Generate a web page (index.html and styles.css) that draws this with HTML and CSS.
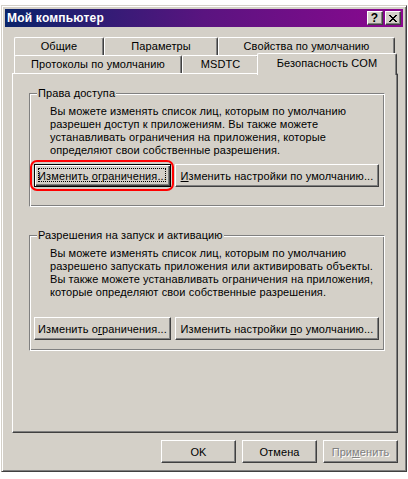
FILE: index.html
```html
<!DOCTYPE html>
<html>

<head>
    <title>Мой компьютер</title>
    <link rel="stylesheet" href="styles.css">
</head>

<body>
    <div class="window">
        <div class="titlebar">
            <span class="title">Мой компьютер</span>
            <div class="title-buttons">
                <span class="tbtn tbtn-help">?</span>
                <span class="tbtn tbtn-close">
                    <svg width="8" height="7" viewBox="0 0 8 7">
                        <path d="M0 0h2v1h1v1h2v-1h1v-1h2v1h-1v1h-1v1h-1v1h1v1h1v1h1v1h-2v-1h-1v-1h-2v1h-1v1h-2v-1h1v-1h1v-1h1v-1h-1v-1h-1v-1h-1z" fill="#000"/>
                    </svg>
                </span>
            </div>
        </div>

        <div class="dialog">
            <div class="tabs">
                <div class="tab-row row-back">
                    <div class="tab tab-general">Общие</div>
                    <div class="tab tab-options">Параметры</div>
                    <div class="tab tab-defaults">Свойства по умолчанию</div>
                </div>
                <div class="tab-row row-front">
                    <div class="tab tab-protocols">Протоколы по умолчанию</div>
                    <div class="tab tab-msdtc">MSDTC</div>
                    <div class="tab tab-security selected">Безопасность COM</div>
                </div>
            </div>

            <div class="panel">
                <!-- Access permissions -->
                <div class="group group-access">
                    <span class="group-title">Права доступа</span>
                    <p class="group-text">
                        Вы можете изменять список лиц, которым по умолчанию<br>
                        разрешен доступ к приложениям. Вы также можете<br>
                        устанавливать ограничения на приложения, которые<br>
                        определяют свои собственные разрешения.
                    </p>
                    <div class="group-buttons">
                        <div class="highlight">
                            <button class="btn btn-limits btn-default">Изменить <u>о</u>граничения...</button>
                        </div>
                        <button class="btn btn-settings"><u>И</u>зменить настройки по умолчанию...</button>
                    </div>
                </div>

                <!-- Launch and activation -->
                <div class="group group-launch">
                    <span class="group-title">Разрешения на запуск и активацию</span>
                    <p class="group-text">
                        Вы можете изменять список лиц, которым по умолчанию<br>
                        разрешено запускать приложения или активировать объекты.<br>
                        Вы также можете устанавливать ограничения на приложения,<br>
                        которые определяют свои собственные разрешения.
                    </p>
                    <div class="group-buttons">
                        <button class="btn btn-limits">Изменить о<u>г</u>раничения...</button>
                        <button class="btn btn-settings">Изменить настройки <u>п</u>о умолчанию...</button>
                    </div>
                </div>
            </div>

            <div class="footer">
                <button class="btn btn-footer">OK</button>
                <button class="btn btn-footer">Отмена</button>
                <button class="btn btn-footer" disabled>При<u>м</u>енить</button>
            </div>
        </div>
    </div>
</body>

</html>
```

FILE: styles.css
```css
body {
    margin: 0;
    background-color: #fff;
    font-family: "Liberation Sans", Arial, sans-serif;
    font-size: 11px;
    letter-spacing: 0.1px;
    color: #000;
}

/* Window frame */
.window {
    box-sizing: border-box;
    width: 406px;
    height: 467px;
    margin: 5px 0 0 1px;
    padding: 3px;
    background-color: #d4d0c8;
    border: 1px solid;
    border-color: #d4d0c8 #404040 #404040 #d4d0c8;
    box-shadow: inset 1px 1px #fff, inset -1px -1px #808080;
}

.titlebar {
    display: flex;
    align-items: center;
    justify-content: space-between;
    height: 18px;
    padding: 0 2px 0 2px;
    background: linear-gradient(to right, #0a246a, #5a1480 50%, #8c0890);
}

.title {
    color: #fff;
    font-weight: bold;
    font-size: 12px;
    letter-spacing: 0.2px;
    white-space: nowrap;
}

.title-buttons {
    display: flex;
    gap: 2px;
}

.tbtn {
    box-sizing: border-box;
    display: flex;
    align-items: center;
    justify-content: center;
    width: 16px;
    height: 14px;
    background-color: #d4d0c8;
    border: 1px solid;
    border-color: #fff #404040 #404040 #fff;
    box-shadow: inset -1px -1px #808080;
}

.tbtn-help {
    font-weight: bold;
    font-size: 12px;
    line-height: 12px;
    padding-right: 1px;
}

/* Dialog content */
.dialog {
    padding: 10px 0 0 7px;
}

.tabs {
    position: relative;
    width: 386px;
    height: 36px;
}

.tab-row {
    display: flex;
    height: 18px;
    padding-left: 2px;
}

.tab {
    box-sizing: border-box;
    height: 19px;
    padding-top: 2px;
    text-align: center;
    white-space: nowrap;
    background-color: #d4d0c8;
    border-left: 1px solid #fff;
    border-top: 1px solid #fff;
    border-right: 1px solid #404040;
    border-top-left-radius: 2px;
    border-top-right-radius: 2px;
    box-shadow: inset -1px 0 #808080;
}

.tab-general { width: 90px; }
.tab-options { width: 114px; }
.tab-defaults { width: 177px; }
.tab-protocols { width: 168px; }
.tab-msdtc { width: 77px; }
.tab-security { width: 136px; }

.row-front {
    position: relative;
}

.tab.selected {
    position: relative;
    z-index: 2;
    width: 140px;
    height: 22px;
    margin: -2px -2px 0;
    padding-top: 3px;
}

.panel {
    position: relative;
    box-sizing: border-box;
    width: 386px;
    height: 360px;
    padding: 19px 14px 0 16px;
    border: 1px solid;
    border-color: #fff #404040 #404040 #fff;
    box-shadow: inset -1px -1px #808080;
}

/* Group boxes */
.group {
    box-sizing: border-box;
    width: 356px;
    padding: 0 0 0 4px;
    border: 1px solid;
    border-color: #808080 #fff #fff #808080;
    box-shadow: inset 1px 1px #fff, inset -1px -1px #808080;
}

.group-title {
    display: block;
    width: fit-content;
    height: 13px;
    line-height: 13px;
    margin: -7px 0 0 3px;
    padding: 0 1px;
    background-color: #d4d0c8;
}

.group-text {
    margin: 5px 0 0 16px;
    line-height: 13px;
    white-space: nowrap;
}

.group-buttons {
    display: flex;
    gap: 4px;
}

.group-access {
    height: 114px;
}

.group-access .group-buttons {
    margin-top: 7px;
}

.group-launch {
    height: 116px;
    margin-top: 28px;
}

.group-launch .group-buttons {
    margin-top: 18px;
}

/* Buttons */
.btn {
    box-sizing: border-box;
    height: 23px;
    padding: 0;
    font-family: inherit;
    font-size: 11px;
    letter-spacing: 0.1px;
    color: #000;
    white-space: nowrap;
    background-color: #d4d0c8;
    border: 1px solid;
    border-color: #fff #404040 #404040 #fff;
    border-radius: 0;
    box-shadow: inset -1px -1px #808080;
}

.btn-limits { width: 137px; }
.btn-settings { width: 204px; }

.btn-default {
    position: relative;
    border-color: #000;
    box-shadow: inset 1px 1px #fff, inset -1px -1px #404040, inset -2px -2px #808080;
}

.btn-default::before {
    content: "";
    position: absolute;
    top: 3px;
    left: 3px;
    right: 4px;
    bottom: 4px;
    border: 1px dotted #000;
}

.highlight {
    position: relative;
}

.highlight::after {
    content: "";
    position: absolute;
    top: -4px;
    left: -4px;
    right: -3px;
    bottom: -4px;
    border: 2px solid #ff0000;
    border-radius: 7px;
}

.footer {
    display: flex;
    justify-content: flex-end;
    gap: 6px;
    width: 386px;
    margin-top: 7px;
}

.btn-footer {
    width: 75px;
}

.btn:disabled {
    color: #808080;
    text-shadow: 1px 1px #fff;
}
```
